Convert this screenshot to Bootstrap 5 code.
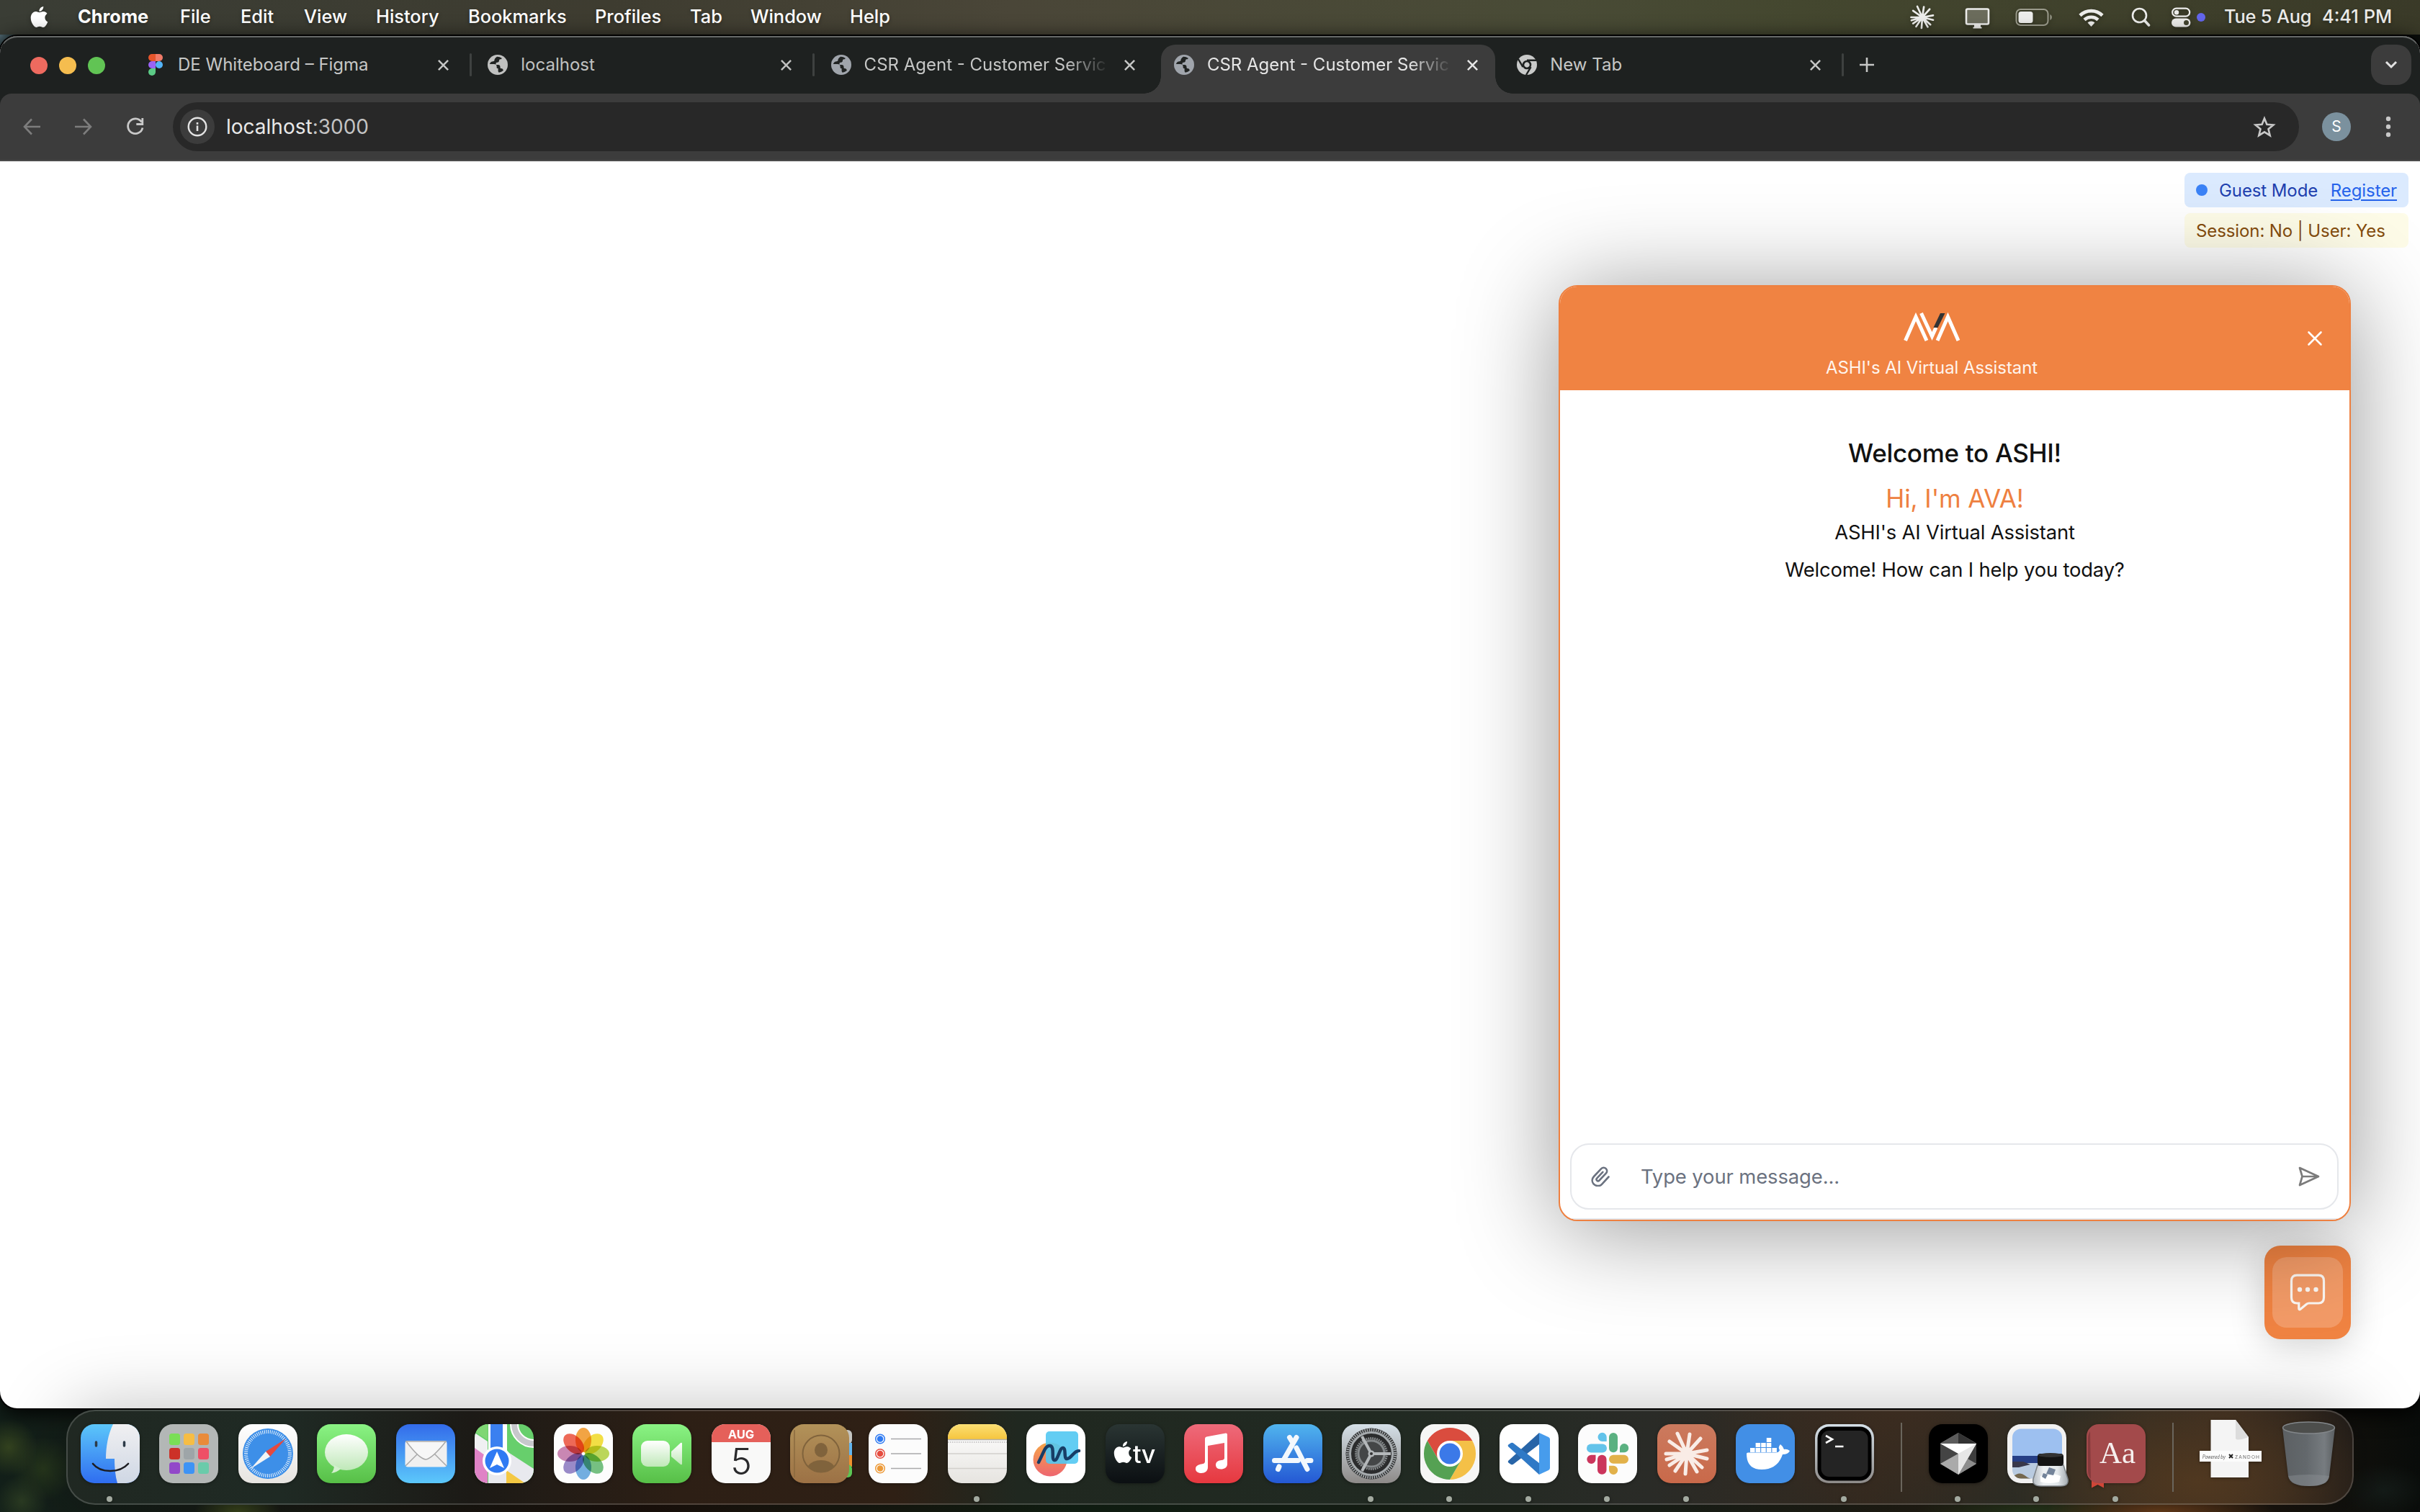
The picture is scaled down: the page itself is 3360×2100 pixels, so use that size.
<!DOCTYPE html>
<html lang="en">
<head>
<meta charset="utf-8">
<title>CSR Agent - Customer Service</title>
<link href="https://cdn.jsdelivr.net/npm/bootstrap@5.3.0/dist/css/bootstrap.min.css" rel="stylesheet">
<style>
  html, body { height: 100%; }
  body { width: 3360px; height: 2100px; overflow: hidden; font-family: Inter, "Liberation Sans", sans-serif; font-size: 26px; color: #111; background: #0b0f0c; }
  .wallpaper { width: 3360px; height: 2100px; background:
    radial-gradient(circle at 12px 2010px, #33421f 0, transparent 40px),
    radial-gradient(circle at 60px 2040px, #26361c 0, transparent 44px),
    radial-gradient(circle at 30px 2085px, #2a3a22 0, transparent 36px),
    radial-gradient(ellipse at 3310px 2070px, #141b18 0, transparent 60px),
    radial-gradient(ellipse 60px 30px at 330px 2100px, #3a461c, transparent),
    radial-gradient(ellipse 160px 30px at 3000px 2100px, #6b3f1c, transparent),
    radial-gradient(ellipse 160px 30px at 2820px 2100px, #26381c, transparent),
    radial-gradient(circle at 0 50px, #4f6670 0, transparent 30px),
    linear-gradient(90deg, #13201a, #1c120c 900px, #122014 1500px, #1b2018 2300px, #241a10 3000px, #0a0d0b); }

  .menubar { height: 48px; padding: 0 37px 2px 41px; color: #fff; font-weight: 500; font-size: 25.4px; text-shadow: 0 2px 5px rgba(0,0,0,.35);
    background: linear-gradient(90deg, #3a3d35, #3e3c30 850px, #4a4638 1400px, #494b36 2150px, #44472f 2500px, #3a3a28); }
  .menubar svg { flex: none; filter: drop-shadow(0 2px 3px rgba(0,0,0,.3)); }
  .menubar .menu-entry { white-space: nowrap; flex: none; }
  .status-area { color: #ececea; }

  .browser { height: 1906px; margin-top: 2px; border-radius: 24px; overflow: hidden; background: #fff; position: relative; box-shadow: 0 0 0 2px #000, 0 6px 30px #000; }
  .browser-rim { position: absolute; inset: 0; border-radius: 24px; border: 1px solid transparent; border-top: 2px solid #666968; z-index: 9; pointer-events: none; }
  .tabstrip { height: 80px; background: #1e2120; padding: 12px 12px 0 42px; }
  .light { width: 24px; height: 24px; border-radius: 50%; margin-right: 16px; }
  .tab-item { width: 464px; height: 68px; margin-right: 12.3px; padding: 0 0 12px 18px; font-size: 24px; color: #c6c7c6; position: relative; flex: none; }
  .tab-item svg, .tabstrip > svg { flex: none; }
  .tab-item .tab-label { width: 336px; margin: 0 24px 0 18px; white-space: nowrap; overflow: hidden; }
  .fade-end { -webkit-mask-image: linear-gradient(90deg, #000 280px, transparent 340px); mask-image: linear-gradient(90deg, #000 280px, transparent 340px); }
  .tab-item.ruled::after { content: ""; position: absolute; right: -8px; top: 12px; width: 3px; height: 32px; background: #3e4140; border-radius: 2px; }
  .tab-item.current { background: #3c3c3c; border-radius: 20px 20px 0 0; color: #e6e6e6; }
  .tab-item.current::before, .tab-item.current::after { content: ""; position: absolute; bottom: 0; width: 24px; height: 24px; }
  .tab-item.current::before { left: -24px; background: radial-gradient(circle at 0 0, transparent 23.5px, #3c3c3c 24px); }
  .tab-item.current::after { right: -24px; background: radial-gradient(circle at 100% 0, transparent 23.5px, #3c3c3c 24px); }
  .tab-search { width: 56px; height: 56px; border-radius: 20px; background: #3c3c3c; }
  .toolbar { height: 94px; background: #3c3c3c; padding: 0 30px 0 32px; border-bottom: 2px solid #4b4b4b; border-radius: 16px 16px 0 0; }
  .tool-wrap { background: #1e2120; }
  .omnibox { width: 2952px; height: 68px; border-radius: 34px; background: #282828; padding: 0 32px 0 10px; color: #c3c3c3; font-size: 28px; }
  .site-chip { width: 48px; height: 48px; border-radius: 50%; background: #3c3c3c; }
  .avatar { width: 40px; height: 40px; border-radius: 50%; background: #7b919e; color: #fff; font-size: 21px; }

  .viewport { height: 1732px; position: relative; padding: 16px; }
  .pills { width: 311px; gap: 8px; font-size: 24px; letter-spacing: -.1px; }
  .pill { height: 48px; border-radius: 8px; padding: 2px 16px 0; white-space: nowrap; }
  .pill-guest { background: #dbeafe; color: #1e40af; }
  .pill-guest .dotmark { width: 16px; height: 16px; border-radius: 50%; background: #3b82f6; margin: -2px 16px 0 0; }
  .pill-guest a { color: #2563eb; text-underline-offset: 4px; }
  .pill-session { background: #fefce8; color: #854d0e; }

  .chat { position: absolute; right: 96px; top: 172px; width: 1100px; height: 1300px; border: 2px solid #ee8040; border-radius: 26px; background: #fff; z-index: 3; box-shadow: 0 10px 136px rgba(0,0,0,.42); overflow: hidden; }
  .chat-head { height: 144px; background: #f08342; color: #fff; padding-left: 32px; }
  .chat-sub { font-size: 24px; line-height: 32px; color: #fff4ec; letter-spacing: -.08px; }
  .chat-body { padding-top: 63px; }
  .h-welcome { font-size: 35px; line-height: 48px; font-weight: 500; letter-spacing: -.3px; }
  .h-ava { font-size: 35px; line-height: 48px; color: #ee8040; margin-top: 15px; letter-spacing: -.1px; }
  .t-line { font-size: 27.4px; line-height: 40px; letter-spacing: -.17px; }
  .composer { height: 92px; margin: 0 15px 12px 14px; border: 2px solid #e5e7eb; border-radius: 26px; padding: 0 24px 0 27px; color: #6b7280; font-size: 27.4px; letter-spacing: -.1px; }
  .foot-rule { height: 2px; background: #e5e7eb; }
  .fab { position: absolute; right: 96px; top: 1506px; width: 120px; height: 130px; border-radius: 22px; background: #f08342; box-shadow: 0 8px 48px rgba(0,0,0,.18); }
  .fab-inner { width: 98px; height: 98px; border-radius: 20px; background: rgba(255,255,255,.2); }

  .dock { position: relative; width: 3176px; height: 132px; margin: 2px 0 0 92px; border-radius: 40px; border: 2px solid rgba(255,255,255,.17); padding: 18px 0 0 18px; gap: 27.44px;
    background:
      radial-gradient(ellipse 260px 140px at 2960px 100px, #503820, transparent),
      radial-gradient(ellipse 260px 140px at 2540px 0, #3b2c20, transparent),
      linear-gradient(90deg, #202822, #1f2a24 300px, #1c1a16 560px, #2d1f15 850px, #2f2015 1150px, #202820 1320px, #212a22 1850px, #2a2b27 2200px, #33291f 2500px, #2c2c24 2720px, #3b2d20 3000px, #211c18);
    background-origin: border-box;
    box-shadow: 0 0 100px rgba(0,0,0,.26); }
  .app { width: 82px; height: 82px; position: relative; flex: none; filter: drop-shadow(0 1px 2px rgba(0,0,0,.35)); }
  .app svg { display: block; overflow: visible; }
  .petals ellipse { mix-blend-mode: multiply; }
  .running::after { content: ""; position: absolute; left: 36px; top: 100px; width: 8px; height: 8px; border-radius: 50%; background: #a3aaa0; }
  .divider { width: 2px; height: 96px; background: #6a655c; margin: -2px 9.5px 0 10px; flex: none; }
</style>
</head>
<body>
<svg width="0" height="0" class="position-absolute">
  <defs>
    <clipPath id="sq"><rect width="82" height="82" rx="19"/></clipPath>
    <linearGradient id="gGreen" x1="0" y1="0" x2="0" y2="1"><stop offset="0" stop-color="#8af384"/><stop offset="1" stop-color="#57bf47"/></linearGradient>
    <linearGradient id="gWhite" x1="0" y1="0" x2="0" y2="1"><stop offset="0" stop-color="#fff"/><stop offset="1" stop-color="#bfe8b8"/></linearGradient>
    <linearGradient id="gBlue" x1="0" y1="0" x2="0" y2="1"><stop offset="0" stop-color="#5cc7fa"/><stop offset="1" stop-color="#2f6df0"/></linearGradient>
    <linearGradient id="gMail" x1="0" y1="0" x2="0" y2="1"><stop offset="0" stop-color="#336bea"/><stop offset="1" stop-color="#5cc8fb"/></linearGradient>
    <linearGradient id="gFace" x1="0" y1="0" x2="0" y2="1"><stop offset="0" stop-color="#f0f0f2"/><stop offset="1" stop-color="#cfd7e4"/></linearGradient>
    <linearGradient id="gPaper" x1="0" y1="0" x2="0" y2="1"><stop offset="0" stop-color="#fff"/><stop offset="1" stop-color="#e6e4e0"/></linearGradient>
    <linearGradient id="gMusic" x1="0" y1="0" x2="0" y2="1"><stop offset="0" stop-color="#ee6a7a"/><stop offset="1" stop-color="#e6383f"/></linearGradient>
    <linearGradient id="gStore" x1="0" y1="0" x2="0" y2="1"><stop offset="0" stop-color="#50b4ee"/><stop offset="1" stop-color="#2458d4"/></linearGradient>
    <linearGradient id="gTv" x1="0" y1="0" x2="0" y2="1"><stop offset="0" stop-color="#2a3533"/><stop offset="1" stop-color="#0b0f12"/></linearGradient>
    <linearGradient id="gGear" x1="0" y1="0" x2="0" y2="1"><stop offset="0" stop-color="#d5e0e8"/><stop offset="1" stop-color="#8d8a88"/></linearGradient>
    <linearGradient id="gBook" x1="0" y1="0" x2="0" y2="1"><stop offset="0" stop-color="#b29259"/><stop offset="1" stop-color="#9c7145"/></linearGradient>
    <linearGradient id="gNote" x1="0" y1="0" x2="0" y2="1"><stop offset="0" stop-color="#fbdf73"/><stop offset="1" stop-color="#f6c53e"/></linearGradient>
    <linearGradient id="gTrash" x1="0" y1="0" x2="1" y2="0"><stop offset="0" stop-color="#5c6063"/><stop offset=".45" stop-color="#63686c"/><stop offset=".8" stop-color="#777c80"/><stop offset="1" stop-color="#5a5e61"/></linearGradient>
    <linearGradient id="gClaude" x1="0" y1="0" x2="0" y2="1"><stop offset="0" stop-color="#cb7a5e"/><stop offset="1" stop-color="#c9694a"/></linearGradient>
    <linearGradient id="gSun" x1="0" y1="0" x2="0" y2="1"><stop offset="0" stop-color="#f5a548"/><stop offset="1" stop-color="#ee6670"/></linearGradient>
    <linearGradient id="gGlass" x1="0" y1="0" x2="1" y2="0"><stop offset="0" stop-color="#b4bbc1"/><stop offset=".3" stop-color="#eef1f3"/><stop offset=".7" stop-color="#e3e8eb"/><stop offset="1" stop-color="#a5abb0"/></linearGradient>
    <symbol id="apple" viewBox="0 0 24 24"><path fill="currentColor" d="M12.152 6.896c-.948 0-2.415-1.078-3.960-1.040-2.040.027-3.910 1.183-4.961 3.014-2.117 3.675-.546 9.103 1.519 12.090 1.013 1.454 2.208 3.090 3.792 3.039 1.520-.065 2.090-.987 3.935-.987 1.831 0 2.350.987 3.960.948 1.637-.026 2.676-1.480 3.676-2.948 1.156-1.688 1.636-3.325 1.662-3.415-.039-.013-3.182-1.221-3.220-4.857-.026-3.040 2.480-4.494 2.597-4.559-1.429-2.090-3.623-2.324-4.390-2.376-2-.156-3.675 1.090-4.610 1.090zM15.530 3.830c.843-1.012 1.400-2.427 1.245-3.830-1.207.052-2.662.805-3.532 1.818-.780.896-1.454 2.338-1.273 3.714 1.338.104 2.715-.688 3.559-1.701"/></symbol>
    <symbol id="burst" viewBox="0 0 82 82"><path fill="none" stroke="currentColor" stroke-width="5" stroke-linecap="round" d="M41 41 28 13M41 41 45 14M41 41 60 20M41 41 69 36M41 41 69 48M41 41 62 60M41 41 55 66M41 41 39 69M41 41 25 65M41 41 17 57M41 41 13 49M41 41 12 41M41 41 17 24"/><circle cx="41" cy="41" r="8" fill="currentColor"/></symbol>
    <symbol id="globe" viewBox="0 0 28 28"><circle cx="14" cy="14" r="14" fill="currentColor"/><path d="M2.800 13H9c2 0 3.600 1.200 3.600 3.200v1.300c0 1 .8 1.500 2 1.500v3.200c0 1 .4 1.800 1.200 2.600A11.200 11.200 0 0 0 21.800 22c-.2-1.800-1.200-3-3-3-1 0-1.300-.7-1.300-1.800 0-2-1-3.200-3-3.200H11.500v-1.800c0-1 .8-1.500 1.800-1.500 1.800 0 2.700-1 2.700-2.600 0-1.200.8-1.800 2-1.800.9 0 1.500-.6 1.700-1.600A11.200 11.200 0 0 0 13 2.800C10.500 4.500 9.500 6 9.500 7.500c0 1.200-.8 1.700-1.800 1.700C5.500 9.200 4 10 2.800 13Z" fill="#202322"/></symbol>
    <symbol id="cross" viewBox="0 0 18 18"><path d="M2 2 16 16M16 2 2 16" stroke="currentColor" stroke-width="2.600" fill="none"/></symbol>
  </defs>
</svg>

<div class="wallpaper">
  <nav class="menubar d-flex align-items-center">
    <svg width="29" height="31" style="margin:0 39px 0 -1px"><use href="#apple"/></svg>
    <div class="menu-entry fw-bold" style="width:142px">Chrome</div>
    <div class="menu-entry" style="width:84px">File</div>
    <div class="menu-entry" style="width:88px">Edit</div>
    <div class="menu-entry" style="width:100px">View</div>
    <div class="menu-entry" style="width:128px">History</div>
    <div class="menu-entry" style="width:176px">Bookmarks</div>
    <div class="menu-entry" style="width:132px">Profiles</div>
    <div class="menu-entry" style="width:84px">Tab</div>
    <div class="menu-entry" style="width:138px">Window</div>
    <div class="menu-entry">Help</div>
    <div class="status-area ms-auto d-flex align-items-center">
      <svg width="44" height="44" viewBox="0 0 82 82" style="margin:2px 37px 0 0"><use href="#burst"/></svg>
      <svg width="36" height="30" style="margin:5px 34px 0 0"><rect x="2" y="1.500" width="31" height="21" rx="2" fill="#6b6c5c" stroke="currentColor" stroke-width="2.600"/><path d="M13 23h9v3.500h1.500V28.500h-12v-2H13Z" fill="currentColor"/></svg>
      <svg width="54" height="26" style="margin:2px 34px 0 0"><rect x="1.500" y="2" width="44" height="22" rx="6" fill="none" stroke="#9b9b8c" stroke-width="2"/><rect x="4.500" y="5" width="20" height="16" rx="3.500" fill="currentColor"/><path d="M48.500 9v8c3-1.500 3-6.500 0-8Z" fill="#9b9b8c"/></svg>
      <svg width="36" height="28" style="margin:2px 37px 0 0"><g fill="none" stroke="currentColor" stroke-width="4.600"><path d="M2 11.500a22 22 0 0 1 31 0"/><path d="M8 17.500a14 14 0 0 1 19 0"/></g><path d="M12.500 21.500a7.500 7.500 0 0 1 10 0L17.500 27Z" fill="currentColor"/></svg>
      <svg width="28" height="28" style="margin:2px 28px 0 0"><circle cx="11.500" cy="11.500" r="9.500" fill="none" stroke="currentColor" stroke-width="2.600"/><path d="m18.500 18.500 6 6.500" stroke="currentColor" stroke-width="3.600" stroke-linecap="round"/></svg>
      <svg width="27" height="28" style="margin:2px 8px 0 0"><rect x="1.200" y="1.700" width="24" height="11" rx="5.500" fill="none" stroke="currentColor" stroke-width="2.200"/><circle cx="7" cy="7.200" r="3.200" fill="currentColor"/><rect y="15.500" width="26.400" height="12" rx="6" fill="currentColor"/><circle cx="20.500" cy="21.500" r="3.500" fill="#43442f"/></svg>
      <span class="rounded-circle" style="width:12px;height:12px;background:#6366ec;margin:2px 26px 0 0"></span>
      <span class="menu-entry" style="width:136px;letter-spacing:-.2px">Tue 5 Aug</span>
      <span class="menu-entry" style="width:99px">4:41 PM</span>
    </div>
  </nav>

  <main class="browser">
    <div class="browser-rim"></div>
    <div class="tabstrip d-flex">
      <div class="d-flex" style="margin:17px 21px 0 0">
        <span class="light" style="background:#ee6a5f"></span><span class="light" style="background:#f5bd4f"></span><span class="light" style="background:#61c454"></span>
      </div>
      <div class="tab-item ruled d-flex align-items-center">
        <svg width="28" height="30" viewBox="-1 0 28 30"><path d="M9 0h5v10H9A5 5 0 0 1 9 0Z" fill="#e6552b"/><path d="M14 0h5a5 5 0 0 1 0 10h-5Z" fill="#f07a68"/><path d="M9 10h5v10H9a5 5 0 0 1 0-10Z" fill="#9a63f5"/><circle cx="19" cy="15" r="5" fill="#53b4f8"/><path d="M9 20h5v5a5 5 0 1 1-5-5Z" fill="#5ccb86"/></svg>
        <div class="tab-label">DE Whiteboard – Figma</div>
        <svg width="17" height="17"><use href="#cross"/></svg>
      </div>
      <div class="tab-item ruled d-flex align-items-center" style="color:#c0c1c0">
        <svg width="28" height="28"><use href="#globe"/></svg>
        <div class="tab-label">localhost</div>
        <svg width="17" height="17"><use href="#cross"/></svg>
      </div>
      <div class="tab-item d-flex align-items-center">
        <svg width="28" height="28" style="color:#a0a5ac"><use href="#globe"/></svg>
        <div class="tab-label fade-end">CSR Agent - Customer Servic</div>
        <svg width="17" height="17"><use href="#cross"/></svg>
      </div>
      <div class="tab-item current d-flex align-items-center">
        <svg width="28" height="28" style="color:#a0a5ac"><use href="#globe"/></svg>
        <div class="tab-label fade-end">CSR Agent - Customer Servic</div>
        <svg width="17" height="17"><use href="#cross"/></svg>
      </div>
      <div class="tab-item ruled d-flex align-items-center">
        <svg width="28" height="28" viewBox="-14 -14 28 28"><circle r="14" fill="#c9cac9"/><circle r="5" fill="none" stroke="#1e2120" stroke-width="2.600"/><path d="M0-6.300H13M-5.500 3.100-12-8M5.500 3.100-1 14" stroke="#1e2120" stroke-width="2.400"/></svg>
        <div class="tab-label">New Tab</div>
        <svg width="17" height="17"><use href="#cross"/></svg>
      </div>
      <svg width="20" height="20" style="margin:18px 0 0 18px"><path d="M10 0v20M0 10h20" stroke="#c6c7c6" stroke-width="2.600"/></svg>
      <div class="tab-search ms-auto d-flex align-items-center justify-content-center"><svg width="18" height="12"><path d="m2 2 7 7 7-7" fill="none" stroke="#e3e3e3" stroke-width="3"/></svg></div>
    </div>
    <div class="tool-wrap">
      <div class="toolbar d-flex align-items-center">
        <svg width="24" height="24" style="margin-right:48px"><path d="M12 1.500 2 12 12 22.500M2 12h22" fill="none" stroke="#7d7d7d" stroke-width="2.600"/></svg>
        <svg width="24" height="24" style="margin-right:47px"><path d="m12 1.500 10 10.500L12 22.500M22 12H0" fill="none" stroke="#7d7d7d" stroke-width="2.600"/></svg>
        <svg width="26" height="26" style="margin-right:39px"><path d="M21.500 6.500A10.300 10.300 0 1 0 23 14.500M22.800 1v8.500h-8.500" fill="none" stroke="#c8c8c8" stroke-width="2.800"/></svg>
        <div class="omnibox d-flex align-items-center">
          <span class="site-chip d-flex align-items-center justify-content-center"><svg width="28" height="28"><circle cx="14" cy="14" r="12.300" fill="none" stroke="#e3e3e3" stroke-width="2.400"/><path d="M14 12.500v7.500M14 8v2.800" stroke="#e3e3e3" stroke-width="2.600"/></svg></span>
          <span style="margin-left:16px"><span style="color:#e8e8e8">localhost</span>:3000</span>
          <svg class="ms-auto" width="32" height="30" viewBox="0 0 32 30"><path d="m16 3.500 3.400 8.300 9 .7-6.900 5.800 2.200 8.800L16 22.300l-7.700 4.800 2.200-8.800-6.900-5.800 9-.7Z" fill="none" stroke="#c8c8c8" stroke-width="2.600"/></svg>
        </div>
        <span class="avatar d-flex align-items-center justify-content-center" style="margin-left:32px">S</span>
        <svg width="8" height="30" class="ms-auto" style="margin-right:10px"><g fill="#c8c8c8"><circle cx="4" cy="4" r="3.200"/><circle cx="4" cy="15" r="3.200"/><circle cx="4" cy="26" r="3.200"/></g></svg>
      </div>
    </div>

    <section class="viewport">
      <div class="pills d-flex flex-column ms-auto">
        <div class="pill pill-guest d-flex align-items-center"><span class="dotmark"></span>Guest Mode<a href="#" class="ms-auto">Register</a></div>
        <div class="pill pill-session d-flex align-items-center">Session: No | User: Yes</div>
      </div>

      <button class="fab border-0 p-0 d-flex align-items-center justify-content-center" type="button">
        <span class="fab-inner d-flex align-items-center justify-content-center">
          <svg width="50" height="52" viewBox="0 0 50 52"><path d="M10 2.200h30Q47.500 2.200 47.500 10v23Q47.500 41 40 41H27q-2 0-3.500 1.300L14.800 49.500q-2 1-2-1.200V41H10Q2.500 41 2.500 33V10Q2.500 2.200 10 2.200Z" fill="none" stroke="#fbf7f3" stroke-width="3.200"/><g fill="#fbf7f3"><circle cx="14" cy="22" r="3.200"/><circle cx="25" cy="22" r="3.200"/><circle cx="36.500" cy="22" r="3.200"/></g></svg>
        </span>
      </button>

      <div class="chat d-flex flex-column">
        <header class="chat-head d-flex flex-shrink-0">
          <div class="d-flex flex-column align-items-center" style="width:968px;padding-top:36px">
            <svg width="80" height="40" viewBox="0 0 80 40"><g fill="none" stroke="#fff" stroke-width="5" stroke-linejoin="miter" stroke-miterlimit="10"><path d="M3.500 39 18 6 33 39"/><path d="M25.500 1 40.500 33 46 21"/><path d="M48 39 62.500 6 77 39"/></g><path d="M52 1h6.500L48.500 21h-6Z" fill="#333"/></svg>
            <div class="chat-sub" style="margin-top:21px">ASHI's AI Virtual Assistant</div>
          </div>
          <svg width="22" height="22" style="margin:61px 0 0 37px"><path d="M2.500 2.500 19.500 19.500M19.500 2.500 2.500 19.500" stroke="#fff" stroke-width="2.600" stroke-linecap="round"/></svg>
        </header>
        <div class="chat-body flex-grow-1 text-center">
          <div class="h-welcome">Welcome to ASHI!</div>
          <div class="h-ava">Hi, I'm AVA!</div>
          <div class="t-line" style="margin-top:3px">ASHI's AI Virtual Assistant</div>
          <div class="t-line" style="margin-top:12px">Welcome! How can I help you today?</div>
        </div>
        <div class="composer d-flex align-items-center flex-shrink-0">
          <svg width="26" height="28" viewBox="0 0 26 28" fill="none" stroke="#6b7280" stroke-width="2.600" stroke-linecap="round"><path d="M24.500 14.500 15 24.800c-3.600 3.800-9 2.400-11.600-.6-2.600-3.200-2-7.400.6-10.200L14 3.300c2-2 5-2 6.800-.2 1.900 2 1.700 4.700 0 6.500L11.500 19.500c-1 1-2.400 1-3.300.1-.9-.9-.8-2.300.1-3.200l8-8.600" /></svg>
          <span style="margin-left:43px;padding-top:1px">Type your message...</span>
          <svg class="ms-auto" width="30" height="28" viewBox="0 0 30 28" fill="none" stroke="#7b7b7b" stroke-width="2.700" stroke-linejoin="round"><path d="M2 2 28 14 2 26 5.500 14ZM5.500 14H28"/></svg>
        </div>
        <div class="foot-rule"></div>
      </div>
    </section>
  </main>

  <footer class="dock d-flex">
    <div class="app running"><svg width="82" height="82"><g clip-path="url(#sq)"><rect width="82" height="82" fill="url(#gBlue)"/><path d="M45 0C38 14 35 32 35 48H47C47 60 48 72 51 82H82V0Z" fill="url(#gFace)"/><path d="M17 55Q25 65 41 65T66 55" fill="none" stroke="#1d1d22" stroke-width="2.600" stroke-linecap="round"/><path d="M21.500 25v5M60.500 25v5" stroke="#2d3b48" stroke-width="3.500" stroke-linecap="round"/></g></svg></div>
    <div class="app"><svg width="82" height="82"><rect width="82" height="82" rx="19" fill="#b3b7b6"/><g><rect x="14" y="13" width="15" height="16" rx="3.500" fill="#7ade56"/><rect x="34" y="13" width="15" height="16" rx="3.500" fill="#f6bd44"/><rect x="54" y="13" width="15" height="16" rx="3.500" fill="#e98b3a"/><rect x="14" y="33" width="15" height="16" rx="3.500" fill="#cc3128"/><rect x="34" y="33" width="15" height="16" rx="3.500" fill="#9ea5a8"/><rect x="54" y="33" width="15" height="16" rx="3.500" fill="#ee5066"/><rect x="14" y="53" width="15" height="16" rx="3.500" fill="#9248c9"/><rect x="34" y="53" width="15" height="16" rx="3.500" fill="#3d93f5"/><rect x="54" y="53" width="15" height="16" rx="3.500" fill="#6acbaa"/></g></svg></div>
    <div class="app"><svg width="82" height="82"><rect width="82" height="82" rx="19" fill="url(#gPaper)"/><circle cx="41" cy="41" r="35" fill="#3d8fe8"/><circle cx="41" cy="41" r="30.500" fill="none" stroke="#e8f2fb" stroke-width="5" stroke-dasharray="1 1.660"/><path d="M66 20 44 45 38 38Z" fill="#e5493f"/><path d="M17 62 44 45 38 38Z" fill="#f3f4f5"/></svg></div>
    <div class="app"><svg width="82" height="82"><rect width="82" height="82" rx="19" fill="url(#gGreen)"/><ellipse cx="41" cy="39" rx="30" ry="25" fill="url(#gWhite)"/><path d="M24 57q0 7-4 11 8-1 13-6Z" fill="#d4f0cf"/></svg></div>
    <div class="app"><svg width="82" height="82"><rect width="82" height="82" rx="19" fill="url(#gMail)"/><rect x="12.500" y="23" width="58" height="36.500" rx="4" fill="#f0f0f0"/><path d="M13 58 31 40M70 58 52 40" stroke="#a9a9a9" stroke-width="1.500"/><path d="M14 24Q32 48 41 49 50 48 69 24Z" fill="#f7f7f7" stroke="#a9a9a9" stroke-width="1.500"/></svg></div>
    <div class="app"><svg width="82" height="82"><g clip-path="url(#sq)"><rect width="82" height="82" fill="#67cf6c"/><path d="M0 0H18V22L0 10Z" fill="#7fd774"/><path d="M0 12 18 24V82H0Z" fill="#f0f0f2"/><path d="M0 33 18 46V82H0Z" fill="#df82c6"/><rect x="19" width="26" height="50" fill="#fff"/><rect x="22" width="17" height="50" fill="#3b80f0"/><path d="M42 36 82 62V82H19V50Z" fill="#e8e9ee"/><path d="M44 64 70 82H44Z" fill="#f4c843"/><circle cx="82" cy="0" r="27" fill="none" stroke="#fff" stroke-width="12"/><circle cx="82" cy="0" r="27" fill="none" stroke="#c7c8cc" stroke-width="8"/></g><circle cx="31" cy="51" r="20" fill="#fff"/><circle cx="31" cy="51" r="16.500" fill="#2f7af3"/><path d="M31 38 41 61 31 56 21 61Z" fill="#fff"/></svg></div>
    <div class="app"><svg width="82" height="82"><rect width="82" height="82" rx="19" fill="#fdfdfd"/><g class="petals"><ellipse cx="41" cy="22" rx="11" ry="17" fill="#f4a544"/><ellipse cx="41" cy="22" rx="11" ry="17" fill="#f4e045" transform="rotate(45 41 41)"/><ellipse cx="41" cy="22" rx="11" ry="17" fill="#bdd85a" transform="rotate(90 41 41)"/><ellipse cx="41" cy="22" rx="11" ry="17" fill="#77c283" transform="rotate(135 41 41)"/><ellipse cx="41" cy="22" rx="11" ry="17" fill="#74b0e2" transform="rotate(180 41 41)"/><ellipse cx="41" cy="22" rx="11" ry="17" fill="#9a8bca" transform="rotate(225 41 41)"/><ellipse cx="41" cy="22" rx="11" ry="17" fill="#cb88b5" transform="rotate(270 41 41)"/><ellipse cx="41" cy="22" rx="11" ry="17" fill="#ef6a58" transform="rotate(315 41 41)"/></g></svg></div>
    <div class="app"><svg width="82" height="82"><rect width="82" height="82" rx="19" fill="url(#gGreen)"/><rect x="12" y="23" width="40" height="36" rx="9" fill="url(#gWhite)"/><path d="M54 38 67 26q2-1 2 1v28q0 2-2 1L54 45Z" fill="url(#gWhite)"/></svg></div>
    <div class="app"><svg width="82" height="82"><g clip-path="url(#sq)"><rect width="82" height="82" fill="#f9f9f8"/><rect width="82" height="25" fill="#e5605a"/></g><text x="41" y="20" text-anchor="middle" font-size="16.500" font-weight="700" fill="#fff">AUG</text><text x="41" y="70" text-anchor="middle" font-size="50" font-weight="300" fill="#2a2a2c">5</text></svg></div>
    <div class="app"><svg width="86" height="82"><rect x="60" y="8" width="26" height="20" rx="6" fill="#c4c4c0"/><rect x="66" y="26" width="20" height="18" fill="#62b5ee"/><rect x="66" y="43" width="20" height="16" fill="#f0912e"/><rect x="62" y="56" width="24" height="18" rx="6" fill="#5cc653"/><rect width="82" height="82" rx="19" fill="url(#gBook)"/><path d="M6 8v66" stroke="#8a6a3f" stroke-width="1.500"/><circle cx="43" cy="41" r="25.500" fill="none" stroke="#80633c" stroke-width="2"/><ellipse cx="43" cy="36" rx="9" ry="10" fill="#80633c"/><path d="M25 58Q31 50 43 50T61 58Q54 66 43 66T25 58Z" fill="#80633c"/></svg></div>
    <div class="app"><svg width="82" height="82"><rect width="82" height="82" rx="19" fill="#fcfcfc"/><path d="M31 20.500H73M31 41H73M31 61.500H73" stroke="#a9a9aa" stroke-width="1.600"/><g fill="none" stroke-width="1.500"><circle cx="16" cy="20.500" r="6.300" stroke="#2f7bf3"/><circle cx="16" cy="41" r="6.300" stroke="#e64c3f"/><circle cx="16" cy="61.500" r="6.300" stroke="#ed9a38"/></g><circle cx="16" cy="20.500" r="4.300" fill="#2f7bf3"/><circle cx="16" cy="41" r="4.300" fill="#e64c3f"/><circle cx="16" cy="61.500" r="4.300" fill="#ed9a38"/></svg></div>
    <div class="app running"><svg width="82" height="82"><g clip-path="url(#sq)"><rect width="82" height="82" fill="url(#gPaper)"/><rect width="82" height="21" fill="url(#gNote)"/><path d="M0 21.500H82" stroke="#b5b1a6" stroke-width="1.500"/><path d="M0 25H82" stroke="#bbb" stroke-width="1.500" stroke-dasharray="1.500 1.500"/><path d="M0 41H82M0 61.500H82" stroke="#d2d0cc" stroke-width="1.500"/></g></svg></div>
    <div class="app"><svg width="82" height="82"><rect width="82" height="82" rx="19" fill="#fff"/><circle cx="33" cy="49" r="23.500" fill="url(#gSun)"/><rect x="27" y="10" width="45" height="45" rx="5" fill="#52c8f2" opacity=".9"/><path d="M17 53C24 40 26 29 33 30S34 49 39 50 46 32 51 33 51 49 57 48 66 37 73 37" fill="none" stroke="#173d66" stroke-width="4.500" stroke-linecap="round"/></svg></div>
    <div class="app"><svg width="82" height="82"><rect width="82" height="82" rx="19" fill="url(#gTv)"/><use href="#apple" x="9" y="24" width="30" height="30" color="#fff"/><text x="38" y="53.500" font-size="34" font-weight="500" fill="#fff" letter-spacing="-.5">tv</text></svg></div>
    <div class="app"><svg width="82" height="82"><rect width="82" height="82" rx="19" fill="url(#gMusic)"/><path d="M29 20Q29 18 31 17.500L58 12.500Q60 12.500 60 14.500V55.500C60 60 56 62.500 51 62.500 46 62.500 44 59.500 44 56.500 44 52 48 50.500 52 50Q56 49.500 56 47V26L33 30V60C33 65 29 68 24 68 19 68 16 65.500 16 62 16 58 20 56 24 55.500Q29 55 29 52Z" fill="#fff"/></svg></div>
    <div class="app"><svg width="82" height="82"><rect width="82" height="82" rx="19" fill="url(#gStore)"/><g stroke="#f3f8fd" stroke-width="7" stroke-linecap="round"><path d="M46 18.500 28 50M36.500 18.500 41 26M46 33 61 62.500M15.500 50.500H48M61 50.500H66M22 59 20.500 62.500"/></g></svg></div>
    <div class="app running"><svg width="82" height="82"><rect width="82" height="82" rx="19" fill="url(#gGear)"/><circle cx="41" cy="41" r="35.500" fill="#2b2c2d"/><circle cx="41" cy="41" r="33" fill="none" stroke="#a6abae" stroke-width="4" stroke-dasharray="1.600 1.500"/><circle cx="41" cy="41" r="29.500" fill="none" stroke="#a6abae" stroke-width="3"/><circle cx="41" cy="41" r="21.500" fill="#4c4e4f" stroke="#8c9092" stroke-width="3" stroke-dasharray="1.600 1.400"/><circle cx="41" cy="41" r="18" fill="#444647" stroke="#85898b" stroke-width="3"/><path d="M41 41H68M41 41 28 17M41 41 28 65" stroke="#b4b8ba" stroke-width="4"/><circle cx="41" cy="41" r="4.500" fill="#b4b8ba"/><circle cx="41" cy="41" r="2" fill="#333"/></svg></div>
    <div class="app running"><svg width="82" height="82"><rect width="82" height="82" rx="19" fill="#f6f6f5"/><g transform="translate(41 41)"><path d="M-31.200-18A36 36 0 0 1 31.200-18H0L-15.600 9Z" fill="#da4c3e"/><path d="M31.200-18A36 36 0 0 1 0 36L15.600 9 0-18Z" fill="#f4c047"/><path d="M0 36A36 36 0 0 1-31.200-18L-15.600 9H15.600Z" fill="#55a153"/><circle r="18" fill="#fff"/><circle r="14.500" fill="#3b79e8"/></g></svg></div>
    <div class="app running"><svg width="82" height="82"><rect width="82" height="82" rx="19" fill="#fff"/><path d="M12 51Q11 53 13 54L16 56Q18 57 20 55L55 28V12Z" fill="#2865a8"/><path d="M12 31Q11 29 13 28L16 26Q18 25 20 27L55 54V70Z" fill="#2f79c6"/><path d="M55 12 68 18Q70 19 70 21V61Q70 63 68 64L55 70Z" fill="#479cec"/></svg></div>
    <div class="app running"><svg width="82" height="82"><rect width="82" height="82" rx="19" fill="#fcfcfc"/><g fill="#63c3ea"><rect x="12" y="27.500" width="28" height="12" rx="6"/><path d="M39.700 24H33.400A6.100 6.100 0 1 1 39.700 18Z"/></g><g fill="#5bb181"><rect x="43" y="12" width="12" height="27.300" rx="6"/><path d="M58 39.300V33.400A6.100 6.100 0 1 1 64 39.300Z"/></g><g fill="#cb355c"><rect x="27" y="42.700" width="12.500" height="27" rx="6"/><path d="M24.500 42.700V48.600A6.100 6.100 0 1 1 18.500 42.700Z"/></g><g fill="#e2b14a"><rect x="43" y="42.700" width="27" height="12" rx="6"/><path d="M43 57.700H49A6.100 6.100 0 1 1 43 64Z"/></g></svg></div>
    <div class="app running"><svg width="82" height="82"><rect width="82" height="82" rx="19" fill="url(#gClaude)"/><use href="#burst" width="82" height="82" color="#f9ece6"/></svg></div>
    <div class="app"><svg width="82" height="82"><rect width="82" height="82" rx="19" fill="#428fe6"/><path d="M15 41Q15 39.500 17 39.500H55Q60 39.500 61 36 58 32 62 28 66 31 67 35 71 34 75 37 73 42 65 42 58 63 36 63 15 63 15 41Z" fill="#fff"/><g fill="#fff"><rect x="20" y="33" width="6.500" height="6"/><rect x="27.600" y="33" width="6.500" height="6"/><rect x="35.200" y="33" width="6.500" height="6"/><rect x="42.800" y="33" width="6.500" height="6"/><rect x="50.400" y="33" width="6.500" height="6"/><rect x="27.600" y="26" width="6.500" height="6"/><rect x="35.200" y="26" width="6.500" height="6"/><rect x="42.800" y="26" width="6.500" height="6"/><rect x="42.800" y="19" width="6.500" height="6"/></g></svg></div>
    <div class="app running"><svg width="82" height="82"><rect width="82" height="82" rx="19" fill="url(#gGear)"/><rect x="3.500" y="3.500" width="75" height="75" rx="16" fill="#000"/><rect x="8.500" y="9" width="65" height="64" rx="11" fill="#242424"/><path d="m15 16 9 5-9 5M28 31H39.500" fill="none" stroke="#fff" stroke-width="2.600"/></svg></div>
    <div class="divider"></div>
    <div class="app running"><svg width="82" height="82"><rect width="82" height="82" rx="19" fill="#000"/><path d="M41 12 66 26.500V55L41 70 16 55V26.500Z" fill="#777"/><path d="M41 12V27H16Z" fill="#5c5c5c"/><path d="M41 12V27H66Z" fill="#333"/><path d="M16 27 41 41 16 55Z" fill="#444"/><path d="M16 55 41 41V70Z" fill="#aaa"/><path d="M66 27V55L54 49Z" fill="#3d3d3d"/><path d="M66 55 54 48 41 70Z" fill="#8d8d8d"/><path d="M16 27H66L41 70V41Z" fill="#fff"/><path d="M41 41 66 27 41 70Z" fill="#e6e6e6"/></svg></div>
    <div class="app running"><svg width="86" height="88"><rect width="82" height="82" rx="19" fill="#f1f1f1"/><clipPath id="pv"><rect x="7" y="6.500" width="69" height="69" rx="12"/></clipPath><g clip-path="url(#pv)"><rect width="82" height="46" fill="#9dc0f0"/><rect y="44" width="82" height="12" fill="#263f86"/><rect y="54" width="82" height="28" fill="#b9cbe0"/><path d="M0 52H22L32 56 16 60H0Z" fill="#39384a"/><path d="M4 76Q16 64 24 71T40 76Z" fill="#75684e"/></g><path d="M42 57H78L84 76Q86 86 74 86H47Q34 86 36 76Z" fill="url(#gGlass)" stroke="#7d8388" stroke-width="1.500"/><path d="M46 72Q60 66 74 72L72 80Q58 84 46 80Z" fill="#fff"/><path d="m58 60 9 3-3 8-10-2ZM50 68l6 2-3 6-5-3Z" fill="#738399"/><rect x="42" y="41" width="36" height="17" rx="4" fill="#141414"/><ellipse cx="60" cy="43" rx="17" ry="3" fill="#333"/></svg></div>
    <div class="app running"><svg width="82" height="90"><path d="M7 76H24V88.500L15.500 84 7 88.500Z" fill="#cf4638"/><rect width="82" height="82" rx="17" fill="#a34a4b"/><path d="M5 10Q2 14 2 20V64Q2 72 6 76Z" fill="#853a3c"/><text x="43" y="54" text-anchor="middle" font-family="Liberation Serif, serif" font-size="43" fill="#f6efee">Aa</text></svg></div>
    <div class="divider"></div>
    <div class="app" style="width:86px;margin-left:-1px"><svg width="86" height="82"><path d="M15.500-6H50L68 18V74H15.500Z" fill="#f4f4f4"/><path d="M50-6 68 18Q52 24 50 20Z" fill="#dcdcdc"/><rect y="37" width="86" height="15" fill="#fcfcfc"/><text x="4" y="47.500" font-size="7.200" font-style="italic" fill="#555" textLength="32" lengthAdjust="spacingAndGlyphs">Powered by</text><path d="m41 42 5 5m0-5-5 5" stroke="#222" stroke-width="2"/><text x="49" y="47.500" font-size="6.600" fill="#666" textLength="34">ZANDOH</text></svg></div>
    <div class="app" style="width:74px;margin-left:1px"><svg width="74" height="88"><path d="M0 5 8 72Q10 86 37 86T65 72L73 5Z" fill="url(#gTrash)"/><path d="M8 72Q37 68 65 72 62 86 37 86T8 72Z" fill="#8b9195" opacity=".45"/><ellipse cx="36.500" cy="5" rx="36" ry="8" fill="#4d4e4c" stroke="#83878a" stroke-width="1.500"/></svg></div>
  </footer>
</div>
<script src="https://cdn.jsdelivr.net/npm/bootstrap@5.3.0/dist/js/bootstrap.bundle.min.js"></script>
</body>
</html>
